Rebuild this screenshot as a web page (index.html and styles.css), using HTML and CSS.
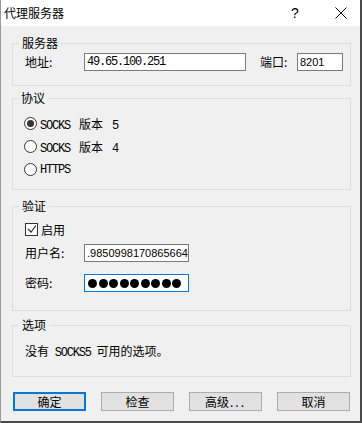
FILE: index.html
```html
<!DOCTYPE html>
<html lang="zh-CN">
<head>
    <meta charset="UTF-8">
    <title>代理服务器</title>
    <link rel="stylesheet" href="styles.css">
</head>
<body>
    <div class="window">
        <div class="titlebar">
            <span class="title">代理服务器</span>
            <span class="help">?</span>
            <svg class="close" width="12" height="12" viewBox="0 0 12 12">
                <path d="M0.5 0.5 L11.5 11.5 M11.5 0.5 L0.5 11.5" stroke="#000" stroke-width="1" fill="none"/>
            </svg>
        </div>
        <div class="content">
            <fieldset class="group g-server">
                <legend>服务器</legend>
                <div class="row">
                    <label class="lbl w-addr">地址:</label>
                    <div class="input addr mono">49.65.100.251</div>
                    <label class="lbl w-port">端口:</label>
                    <div class="input port">8201</div>
                </div>
            </fieldset>

            <fieldset class="group g-proto">
                <legend>协议</legend>
                <div class="radio-row"><span class="radio checked"></span><span class="mono">SOCKS <span class="cn">版本</span> 5</span></div>
                <div class="radio-row"><span class="radio"></span><span class="mono">SOCKS <span class="cn">版本</span> 4</span></div>
                <div class="radio-row"><span class="radio"></span><span class="mono">HTTPS</span></div>
            </fieldset>

            <fieldset class="group g-auth">
                <legend>验证</legend>
                <div class="check-row">
                    <span class="checkbox">
                        <svg width="10" height="10" viewBox="0 0 10 10"><path d="M1 5 L4 8 L9 1.5" stroke="#333" stroke-width="1.2" fill="none"/></svg>
                    </span>
                    <span>启用</span>
                </div>
                <div class="row user-row">
                    <label class="lbl w-addr">用户名:</label>
                    <div class="input user">.9850998170865664</div>
                </div>
                <div class="row pass-row">
                    <label class="lbl w-addr">密码:</label>
                    <div class="input pass">
                        <span class="dot"></span><span class="dot"></span><span class="dot"></span>
                        <span class="dot"></span><span class="dot"></span><span class="dot"></span>
                        <span class="dot"></span><span class="dot"></span><span class="dot"></span>
                    </div>
                </div>
            </fieldset>

            <fieldset class="group g-opts">
                <legend>选项</legend>
                <div class="note">没有 <span class="mono">SOCKS5</span> 可用的选项。</div>
            </fieldset>

            <div class="buttons">
                <button class="btn default">确定</button>
                <button class="btn">检查</button>
                <button class="btn">高级<span class="dots">...</span></button>
                <button class="btn">取消</button>
            </div>
        </div>
    </div>
</body>
</html>
```

FILE: styles.css
```css
body { margin: 0; background: #f0f0f0; font-family: "Noto Sans CJK SC", "Liberation Sans", sans-serif; font-size: 12px; color: #000; }
.window { width: 362px; height: 423px; box-sizing: border-box; background: #f0f0f0; border-left: 1px solid #9a9a9a; border-right: 2px solid #4a4a4a; border-bottom: 2px solid #4a4a4a; overflow: hidden; }

.titlebar { height: 26px; background: #fff; display: flex; align-items: center; padding-left: 3px; }
.title { flex: 1; line-height: 16px; }
.help { width: 10px; font-family: "Liberation Sans", sans-serif; font-size: 14px; margin-right: 34px; }
.close { margin-right: 13px; }

.content { padding: 9px 9px 0 11px; }

.group { margin: 0; padding: 0 0 0 12px; border: 1px solid #dcdcdc; box-sizing: border-box; min-width: 0; }
.group legend { padding: 0 3px; margin-left: -6px; line-height: 16px; }
.g-server { height: 51px; padding-top: 2px; }
.g-proto { height: 100px; margin-top: 4px; padding-top: 6px; padding-left: 11px; }
.g-auth { height: 113px; margin-top: 8px; padding-top: 4px; }
.g-opts { height: 60px; margin-top: 6px; padding-top: 10px; }

.row { display: flex; align-items: center; height: 18px; }
.lbl { line-height: 16px; }
.w-addr { width: 59px; }
.w-port { width: 37px; margin-left: 14px; }
.input { height: 18px; box-sizing: border-box; border: 1px solid #7a7a7a; background: #fff; padding-left: 2px; display: flex; align-items: center; font-family: "Liberation Sans", sans-serif; font-size: 11px; overflow: hidden; white-space: nowrap; }
.addr { width: 162px; }
.port { width: 46px; }
.user { width: 105px; }
.pass { width: 105px; border-color: #0078d7; gap: 1.5px; padding-left: 3px; }
.dot { width: 9px; height: 9px; border-radius: 50%; background: #000; flex: none; }

.mono { font-family: "Liberation Mono", "Noto Sans CJK SC", monospace; font-size: 12px; letter-spacing: -1.2px; word-spacing: 3px; }
.mono .cn { font-family: "Noto Sans CJK SC", sans-serif; font-size: 12px; letter-spacing: 0; }
.input.mono { font-size: 12px; }

.radio-row { display: flex; align-items: center; height: 23px; }
.radio { width: 11px; height: 11px; border: 1px solid #333; border-radius: 50%; background: #fff; margin-right: 3px; position: relative; flex: none; }
.radio.checked::after { content: ""; position: absolute; left: 2px; top: 2px; width: 7px; height: 7px; border-radius: 50%; background: #333; }

.check-row { display: flex; align-items: center; height: 22px; }
.checkbox { width: 11px; height: 11px; border: 1px solid #333; background: #fff; margin-right: 3px; display: flex; align-items: center; justify-content: center; }
.user-row { margin-top: 4px; }
.pass-row { margin-top: 12px; }

.note { line-height: 16px; word-spacing: 3px; }
.note .mono { word-spacing: 0; }

.buttons { display: flex; justify-content: space-between; margin: 15px 0 0 1px; width: 337px; }
.btn { width: 73px; height: 19px; box-sizing: border-box; padding: 0; border: 1px solid #adadad; background: #e1e1e1; font-family: "Noto Sans CJK SC", sans-serif; font-size: 12px; line-height: 16px; color: #000; }
.btn.default { border: 2px solid #0078d7; }
.dots { letter-spacing: 2px; margin-left: 1px; }
```
